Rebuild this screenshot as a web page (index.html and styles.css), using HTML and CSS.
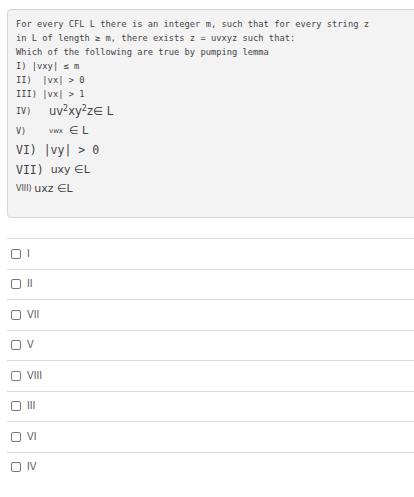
FILE: index.html
```html
<!DOCTYPE html>
<html>
<head>
<meta charset="utf-8">
<link rel="stylesheet" href="styles.css">
</head>
<body>
<div class="frame">
<div class="question">
  <div class="mono">
    <div class="ln">For every CFL L there is an integer m, such that for every string z</div>
    <div class="ln">in L of length ≥ m, there exists z = uvxyz such that:</div>
    <div class="ln">Which of the following are true by pumping lemma</div>
    <div class="ln">I) |vxy| ≤ m</div>
    <div class="ln">II)&nbsp; |vx| &gt; 0</div>
    <div class="ln">III) |vx| &gt; 1</div>
  </div>
  <div class="row l7"><span class="small">IV)</span><span class="sans12">uv<sup>2</sup>xy<sup>2</sup>z∈&nbsp;L</span></div>
  <div class="row l8"><span class="small">V)</span><span class="tiny">vwx</span><span class="sans11">∈&nbsp;L</span></div>
  <div class="row l9"><span>VI)&nbsp;|vy|&nbsp;&gt;&nbsp;0</span></div>
  <div class="row l10"><span>VII)&nbsp;</span><span class="sans11b">uxy&nbsp;∈L</span></div>
  <div class="row l11"><span class="small2">VIII)&nbsp;</span><span class="sans11b">uxz&nbsp;∈L</span></div>
</div>
<div class="options">
  <label class="opt"><span class="box"></span><span class="txt">I</span></label>
  <label class="opt"><span class="box"></span><span class="txt">II</span></label>
  <label class="opt"><span class="box"></span><span class="txt">VII</span></label>
  <label class="opt"><span class="box"></span><span class="txt">V</span></label>
  <label class="opt"><span class="box"></span><span class="txt">VIII</span></label>
  <label class="opt"><span class="box"></span><span class="txt">III</span></label>
  <label class="opt"><span class="box"></span><span class="txt">VI</span></label>
  <label class="opt last"><span class="box"></span><span class="txt">IV</span></label>
</div>
</div>
</body>
</html>
```
FILE: styles.css
```css
html, body {
  margin: 0;
  padding: 0;
  background: #fff;
}
.frame {
  width: 414px;
  height: 497px;
  overflow: hidden;
  color: #444;
}
.question {
  margin: 9px 0 0 7px;
  width: 420px;
  height: 209px;
  box-sizing: border-box;
  background: #f3f3f3;
  border: 1px solid #d6d6d6;
  border-radius: 4px;
  padding: 7px 0 0 8px;
}
.mono {
  font-family: "DejaVu Sans Mono", "Liberation Mono", monospace;
  font-size: 8.75px;
  line-height: 14px;
  color: #444;
}
.ln {
  height: 14px;
  white-space: pre;
}
.row {
  display: flex;
  align-items: center;
  white-space: nowrap;
}
.l7 { height: 20px; }
.l8 { height: 19px; }
.l9 { height: 20px; font-family: "DejaVu Sans Mono", monospace; font-size: 11.5px; }
.l10 { height: 19px; font-family: "DejaVu Sans Mono", monospace; font-size: 11.5px; }
.l11 { height: 19px; }
.small {
  font-family: "DejaVu Sans Mono", monospace;
  font-size: 8.5px;
  width: 33px;
}
.small2 {
  font-family: "DejaVu Sans", sans-serif;
  font-size: 8px;
}
.sans12 {
  font-family: "DejaVu Sans", sans-serif;
  font-size: 11.5px;
}
.sans12 sup {
  font-size: 8px;
  vertical-align: 4px;
  line-height: 0;
}
.tiny {
  font-family: "DejaVu Sans", sans-serif;
  font-size: 7px;
  margin-right: 6px;
}
.sans11, .sans11b {
  font-family: "DejaVu Sans", sans-serif;
  font-size: 11px;
}
.options {
  margin: 20px 0 0 7px;
  width: 407px;
}
.opt {
  display: flex;
  align-items: center;
  height: 30.5px;
  box-sizing: border-box;
  border-top: 1px solid #dcdcdc;
  padding-left: 4px;
  font-family: "Liberation Sans", Arial, sans-serif;
  font-size: 10px;
  color: #555;
}
.box {
  width: 10px;
  height: 10px;
  box-sizing: border-box;
  border: 1px solid #777;
  border-radius: 2px;
  background: #fff;
  margin-right: 6px;
}
.txt { line-height: 12px; }
```
